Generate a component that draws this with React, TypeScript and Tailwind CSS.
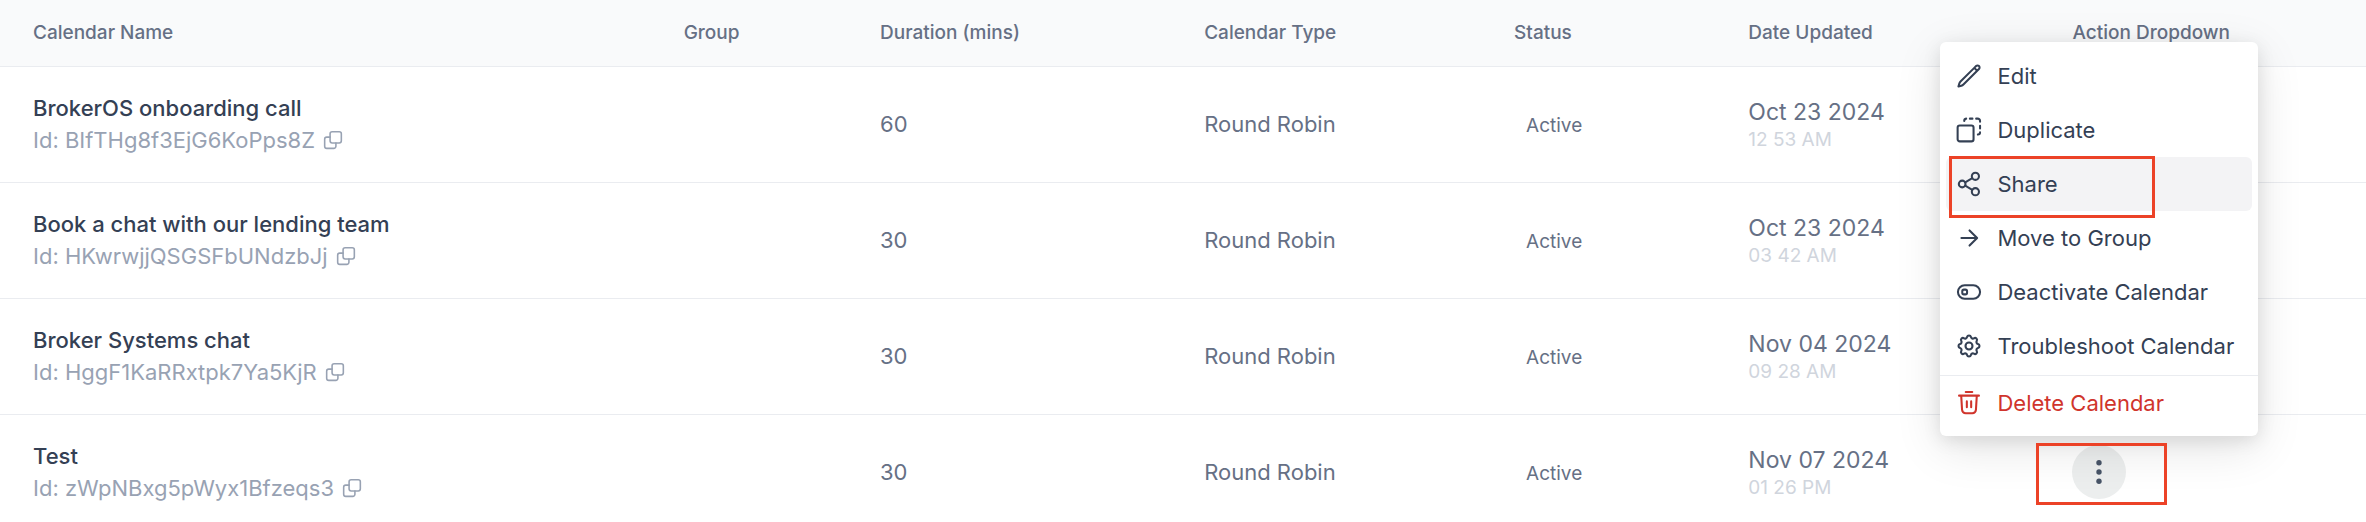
import type { ReactNode } from "react";
import { HiOutlineCog } from "react-icons/hi";
import { HiOutlinePencil } from "react-icons/hi2";

type Calendar = {
  name: string;
  id: string;
  duration: number;
  type: string;
  status: string;
  date: string;
  time: string;
};

const calendars: Calendar[] = [
  {
    name: "BrokerOS onboarding call",
    id: "BIfTHg8f3EjG6KoPps8Z",
    duration: 60,
    type: "Round Robin",
    status: "Active",
    date: "Oct 23 2024",
    time: "12 53 AM",
  },
  {
    name: "Book a chat with our lending team",
    id: "HKwrwjjQSGSFbUNdzbJj",
    duration: 30,
    type: "Round Robin",
    status: "Active",
    date: "Oct 23 2024",
    time: "03 42 AM",
  },
  {
    name: "Broker Systems chat",
    id: "HggF1KaRRxtpk7Ya5KjR",
    duration: 30,
    type: "Round Robin",
    status: "Active",
    date: "Nov 04 2024",
    time: "09 28 AM",
  },
  {
    name: "Test",
    id: "zWpNBxg5pWyx1Bfzeqs3",
    duration: 30,
    type: "Round Robin",
    status: "Active",
    date: "Nov 07 2024",
    time: "01 26 PM",
  },
];

const openMenuId = "zWpNBxg5pWyx1Bfzeqs3";

function Icon({ className, children }: { className: string; children: ReactNode }) {
  return (
    <svg
      viewBox="0 0 24 24"
      fill="none"
      stroke="currentColor"
      strokeWidth="1.9"
      strokeLinecap="round"
      strokeLinejoin="round"
      className={className}
      aria-hidden="true"
    >
      {children}
    </svg>
  );
}

function CopyIcon() {
  return (
    <Icon className="size-5">
      <rect x="8.5" y="2" width="13.5" height="13.5" rx="2.5" />
      <path d="M8.5 8.5h-4A2.5 2.5 0 0 0 2 11v8.5A2.5 2.5 0 0 0 4.5 22H13a2.5 2.5 0 0 0 2.5-2.5v-4" />
    </Icon>
  );
}

function DuplicateIcon() {
  return (
    <Icon className="size-[26px]">
      <rect x="1.5" y="7.8" width="14.7" height="14.7" rx="2" />
      <path d="M7.6 3.7a2.2 2.2 0 0 1 1.8-2.2M12.8 1.5h2.4M18.6 1.5h1.4a2.2 2.2 0 0 1 2.2 2.2v.6M22.2 8v2.6M22.2 14a2.2 2.2 0 0 1-2 2.2" />
    </Icon>
  );
}

function ShareIcon() {
  return (
    <Icon className="size-[26px]">
      <circle cx="5.7" cy="12" r="3.1" />
      <circle cx="17.9" cy="4.9" r="3.3" />
      <circle cx="17.9" cy="19.1" r="3.3" />
      <path d="M8.5 10.4l6.5-3.8M8.5 13.6l6.5 3.8" />
    </Icon>
  );
}

function ArrowIcon() {
  return (
    <Icon className="size-[26px]">
      <path d="M5 12h14M12.5 5l7 7-7 7" />
    </Icon>
  );
}

function ToggleIcon() {
  return (
    <Icon className="size-[26px]">
      <rect x="1.8" y="5.8" width="20.4" height="12.4" rx="6.2" />
      <rect x="5.8" y="9.8" width="4.4" height="4.4" rx="1.5" />
    </Icon>
  );
}

function TrashIcon() {
  return (
    <Icon className="size-[26px]">
      <path d="M9 1.8h6M2.8 5.2h18.4M4.8 5.2l.8 13.1a3.3 3.3 0 0 0 3.3 3.2h6.2a3.3 3.3 0 0 0 3.3-3.2l.8-13.1M10 10.5v5.5M14 10.5v5.5" />
    </Icon>
  );
}

type MenuItemProps = {
  icon: ReactNode;
  label: string;
  active?: boolean;
  danger?: boolean;
};

function MenuItem({ icon, label, active, danger }: MenuItemProps) {
  return (
    <li className="relative">
      <button
        type="button"
        className={`flex h-[54px] w-full items-center gap-[15px] rounded-md px-2.5 text-left ${
          active ? "bg-[#f3f3f5]" : ""
        } ${danger ? "text-[#d0342c]" : "text-[#344054]"}`}
      >
        {icon}
        {label}
      </button>
      {active && (
        <span className="pointer-events-none absolute -top-px left-[3px] h-[62px] w-[206px] border-3 border-[#ec4227]" />
      )}
    </li>
  );
}

function ActionMenu() {
  return (
    <div className="absolute bottom-full -left-33 z-10 mb-[9px] w-[318px] rounded-md bg-white pt-[7px] pb-1.5 text-[22px] shadow-[0_12px_48px_rgba(0,0,0,0.11),0_4px_18px_rgba(0,0,0,0.10)]">
      <ul className="px-1.5">
        <MenuItem
          icon={<HiOutlinePencil className="size-[26px]" strokeWidth={1.9} />}
          label="Edit"
        />
        <MenuItem icon={<DuplicateIcon />} label="Duplicate" />
        <MenuItem icon={<ShareIcon />} label="Share" active />
        <MenuItem icon={<ArrowIcon />} label="Move to Group" />
        <MenuItem icon={<ToggleIcon />} label="Deactivate Calendar" />
        <MenuItem
          icon={<HiOutlineCog className="-mx-px size-7" strokeWidth={1.8} />}
          label="Troubleshoot Calendar"
        />
      </ul>
      <ul className="mt-0.5 border-t border-[#eaecf0] px-1.5">
        <MenuItem icon={<TrashIcon />} label="Delete Calendar" danger />
      </ul>
    </div>
  );
}

function ActionCell({ open }: { open: boolean }) {
  return (
    <div className="relative w-fit">
      <button
        type="button"
        aria-label="Calendar actions"
        className={`flex size-[54px] items-center justify-center rounded-full text-[#475467] ${
          open ? "bg-[#eceeee]" : ""
        }`}
      >
        <svg viewBox="0 0 24 24" className="size-6" fill="currentColor" aria-hidden="true">
          <circle cx="12" cy="2.7" r="2.7" />
          <circle cx="12" cy="12" r="2.7" />
          <circle cx="12" cy="21.3" r="2.7" />
        </svg>
      </button>
      {open && (
        <>
          <ActionMenu />
          <span className="pointer-events-none absolute -top-0.5 -left-9 z-20 h-[62px] w-[131px] border-3 border-[#ec4227]" />
        </>
      )}
    </div>
  );
}

export default function App() {
  return (
    <main className="overflow-hidden bg-white font-['Inter',sans-serif]">
      <table className="w-full table-fixed text-left text-[22px] text-[#667085]">
        <colgroup>
          <col className="w-[27.5%]" />
          <col className="w-[8.3%]" />
          <col className="w-[13.7%]" />
          <col className="w-[13.1%]" />
          <col className="w-[9.9%]" />
          <col className="w-[13.7%]" />
          <col />
        </colgroup>
        <thead className="bg-[#f9fafb] text-[19px]">
          <tr className="h-[66px] border-b border-[#eaecf0]">
            <th className="px-[33px] font-medium">Calendar Name</th>
            <th className="px-[33px] font-medium">Group</th>
            <th className="px-[33px] font-medium">Duration (mins)</th>
            <th className="px-[33px] font-medium">Calendar Type</th>
            <th className="px-[33px] font-medium">Status</th>
            <th className="px-[33px] font-medium">Date Updated</th>
            <th className="px-[33px] font-medium">Action Dropdown</th>
          </tr>
        </thead>
        <tbody>
          {calendars.map((calendar) => (
            <tr key={calendar.id} className="h-[116px] border-b border-[#eaecf0]">
              <td className="px-[33px] leading-8">
                <p className="font-medium text-[#344054]">{calendar.name}</p>
                <p className="flex items-center gap-2 text-[#98a2b3]">
                  Id: {calendar.id}
                  <button type="button" aria-label="Copy id">
                    <CopyIcon />
                  </button>
                </p>
              </td>
              <td className="px-[33px]" />
              <td className="px-[33px]">{calendar.duration}</td>
              <td className="px-[33px]">{calendar.type}</td>
              <td className="px-[33px]">
                <span className="px-3 text-[19px]">{calendar.status}</span>
              </td>
              <td className="px-[33px]">
                <p className="text-[23px] leading-8">{calendar.date}</p>
                <p className="text-[19px] leading-6 text-[#d0d5dd]">{calendar.time}</p>
              </td>
              <td className="px-[33px]">
                <ActionCell open={calendar.id === openMenuId} />
              </td>
            </tr>
          ))}
        </tbody>
      </table>
    </main>
  );
}
